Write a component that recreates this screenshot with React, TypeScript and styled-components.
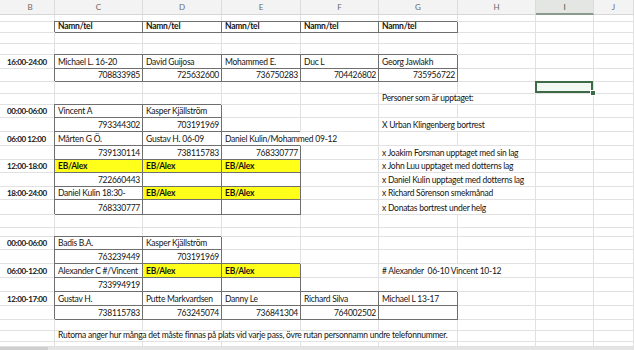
import React from "react";
import styled, { createGlobalStyle, css } from "styled-components";

const GRID = "#e1e1e1";
const INK = "#6f6f6f";
const SEL = "#3d6b47";

const GlobalStyle = createGlobalStyle`
  html, body {
    margin: 0;
    padding: 0;
    background: #fff;
    overflow: hidden;
  }
  #root {
    width: 634px;
    height: 350px;
  }
`;

const COLS = ["B", "C", "D", "E", "F", "G", "H", "I", "J"];
const WIDTHS = [55, 88, 79, 79, 78, 79, 78, 58, 40];
const HEIGHTS = [7, 11, 11, 11, 14, 13, 12, 11, 13, 14, 14, 14, 13, 14, 13, 15, 13, 9, 13, 14, 14, 14, 14, 14, 11, 11, 5];

type Spec = {
  t?: string;
  box?: boolean;
  noRight?: boolean;
  yellow?: boolean;
  bold?: boolean;
  right?: boolean;
  span?: number;
  sel?: boolean;
  time?: boolean;
};

const name = (t: string): Spec => ({ t, box: true });
const tel = (t = ""): Spec => ({ t, box: true, right: true });
const eb: Spec = { t: "EB/Alex", box: true, yellow: true, bold: true };
const time = (t: string): Spec => ({ t, time: true });
const note = (t: string): Spec => ({ t, span: 2 });
const head: Spec = { t: "Namn/tel", box: true, bold: true };

const ROWS: Record<string, Spec>[] = [
  {},
  { C: head, D: head, E: head, F: head, G: head },
  {},
  {},
  {
    B: time("16:00-24:00"),
    C: name("Michael L. 16-20"),
    D: name("David Guijosa"),
    E: name("Mohammed E."),
    F: name("Duc L"),
    G: name("Georg Jawlakh"),
  },
  {
    C: tel("708833985"),
    D: tel("725632600"),
    E: tel("736750283"),
    F: tel("704426802"),
    G: tel("735956722"),
  },
  { I: { sel: true } },
  { G: note("Personer som är upptaget:") },
  {
    B: time("00:00-06:00"),
    C: name("Vincent A"),
    D: name("Kasper Kjällström"),
  },
  {
    C: tel("793344302"),
    D: tel("703191969"),
    G: note("X Urban Klingenberg bortrest"),
  },
  {
    B: time("06:00 12:00"),
    C: name("Mårten G Ö."),
    D: name("Gustav H. 06-09"),
    E: { t: "Daniel Kulin/Mohammed 09-12", box: true, noRight: true },
  },
  {
    C: tel("739130114"),
    D: tel("738115783"),
    E: tel("768330777"),
    G: note("x Joakim Forsman upptaget med sin lag"),
  },
  {
    B: time("12:00-18:00"),
    C: eb,
    D: eb,
    E: eb,
    G: note("x John Luu upptaget med dotterns lag"),
  },
  {
    C: tel("722660443"),
    D: tel(),
    E: tel(),
    G: note("x Daniel Kulin upptaget med dotterns lag"),
  },
  {
    B: time("18:00-24:00"),
    C: name("Daniel Kulin 18:30-"),
    D: eb,
    E: eb,
    G: note("x Richard Sörenson smekmånad"),
  },
  {
    C: tel("768330777"),
    D: tel(),
    E: tel(),
    G: note("x Donatas bortrest under helg"),
  },
  {},
  {},
  {
    B: time("00:00-06:00"),
    C: name("Badis B.A."),
    D: name("Kasper Kjällström"),
  },
  {
    C: tel("763239449"),
    D: tel("703191969"),
  },
  {
    B: time("06:00-12:00"),
    C: name("Alexander C #/Vincent"),
    D: eb,
    E: eb,
    G: note("# Alexander  06-10 Vincent 10-12"),
  },
  {
    C: tel("733994919"),
    D: tel(),
    E: tel(),
  },
  {
    B: time("12:00-17:00"),
    C: name("Gustav H."),
    D: name("Putte Markvardsen"),
    E: name("Danny Le"),
    F: name("Richard Silva"),
    G: name("Michael L 13-17"),
  },
  {
    C: tel("738115783"),
    D: tel("763245074"),
    E: tel("736841304"),
    F: tel("764002502"),
    G: tel(),
  },
  {},
  {
    C: {
      t: "Rutorna anger hur många det måste finnas på plats vid varje pass, övre rutan personnamn undre telefonnummer.",
      span: 5,
    },
  },
  {},
];

const Sheet = styled.div`
  display: grid;
  grid-template-columns: ${WIDTHS.map((w) => `${w}px`).join(" ")};
  grid-template-rows: 15px ${HEIGHTS.map((h) => `${h}px`).join(" ")};
  font-family: Lato, "Open Sans", sans-serif;
  color: #141414;
`;

const ColHead = styled.div<{ $active?: boolean; $first?: boolean }>`
  box-sizing: border-box;
  display: flex;
  align-items: center;
  justify-content: center;
  padding-left: ${(p) => (p.$first ? "6px" : "0")};
  background: ${(p) => (p.$active ? "#e3e6e3" : "#f3f3f3")};
  border-right: 1px solid #dcdcdc;
  border-bottom: ${(p) => (p.$active ? `2px solid #8a9a8d` : "1px solid #d6d6d6")};
  font-size: 8px;
  color: ${(p) => (p.$active ? "#3a5a40" : "#6a6a6a")};
`;

const Cell = styled.div<{
  $span: number;
  $box?: boolean;
  $noRight?: boolean;
  $yellow?: boolean;
  $bold?: boolean;
  $right?: boolean;
  $sel?: boolean;
}>`
  grid-column: span ${(p) => p.$span};
  box-sizing: border-box;
  position: relative;
  display: flex;
  align-items: flex-end;
  justify-content: ${(p) => (p.$right ? "flex-end" : "flex-start")};
  padding: 0 2px 1px 3px;
  min-width: 0;
  font-size: 8.5px;
  line-height: 10px;
  letter-spacing: -0.25px;
  font-weight: ${(p) => (p.$bold ? 700 : 400)};
  white-space: pre;
  overflow: visible;
  background: ${(p) => (p.$yellow ? "#ffff1a" : "transparent")};
  border-right: 1px solid ${GRID};
  border-bottom: 1px solid ${GRID};

  ${(p) =>
    p.$box &&
    css`
      border-right-color: ${p.$noRight ? "transparent" : INK};
      border-bottom-color: ${INK};
      box-shadow: -1px -1px 0 0 ${INK};
    `}

  ${(p) =>
    p.$sel &&
    css`
      background: #f2f8f2;
      &::after {
        content: "";
        position: absolute;
        inset: -1px 0 0 -1px;
        border: 2px solid ${SEL};
      }
      &::before {
        content: "";
        position: absolute;
        right: -3px;
        bottom: -3px;
        width: 4px;
        height: 4px;
        background: ${SEL};
        border: 1px solid #fff;
        z-index: 2;
      }
    `}
`;

const TimeCell = styled(Cell)`
  padding-left: 7px;
  font-size: 8px;
  font-weight: 700;
  letter-spacing: -0.4px;
`;

const TabStrip = styled.div`
  height: 3px;
  background: linear-gradient(to right, #cfcfcf 0 48px, #e4e4e4 48px);
`;

function renderRow(row: Record<string, Spec>, ri: number) {
  const out: React.ReactNode[] = [];
  let skip = 0;
  COLS.forEach((c) => {
    if (skip > 0) {
      skip--;
      return;
    }
    const s = row[c] || {};
    const span = s.span || 1;
    skip = span - 1;
    const Comp = s.time ? TimeCell : Cell;
    out.push(
      <Comp
        key={`${ri}-${c}`}
        $span={span}
        $box={s.box}
        $noRight={s.noRight}
        $yellow={s.yellow}
        $bold={s.bold}
        $right={s.right}
        $sel={s.sel}
      >
        {s.t}
      </Comp>
    );
  });
  return out;
}

export default function App() {
  return (
    <>
      <GlobalStyle />
      <Sheet>
        {COLS.map((c, i) => (
          <ColHead key={c} $active={c === "I"} $first={i === 0}>
            {c}
          </ColHead>
        ))}
        {ROWS.map((row, ri) => renderRow(row, ri))}
      </Sheet>
      <TabStrip />
    </>
  );
}
